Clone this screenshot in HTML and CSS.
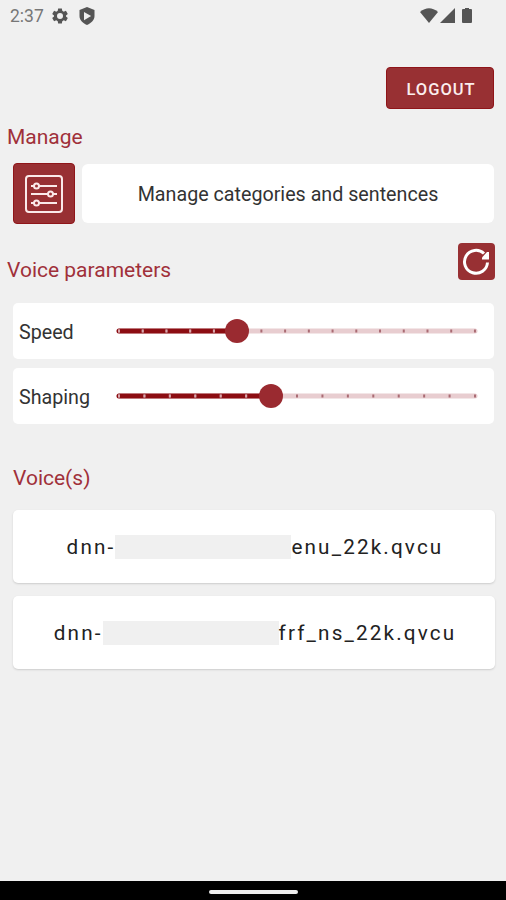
FILE: index.html
```
<!DOCTYPE html>
<html lang="en">
<head>
    <meta charset="UTF-8">
    <title>Voice settings</title>
    <link rel="stylesheet" href="styles.css">
</head>
<body>
    <header class="status-bar">
        <span class="clock">2:37</span>
        <svg class="gear" width="18" height="18" viewBox="0 0 24 24"><path fill-rule="evenodd" d="M9.500 2h5l.5 3 2 1.200 2.900-1.100 2.500 4.300-2.400 1.900v1.400l2.400 1.900-2.500 4.300-2.900-1.100-2 1.200-.5 3h-5L9 19l-2-1.200-2.900 1.100-2.500-4.300L4 12.700v-1.400L1.600 9.400l2.500-4.300L7 6.200 9 5zM12 8a4 4 0 1 0 0 8 4 4 0 0 0 0-8z"/></svg>
        <svg class="shield" width="18" height="18" viewBox="0 0 24 24"><path fill-rule="evenodd" d="M12 0l10 4v8c0 5-4 9.500-10 12-6-2.500-10-7-10-12V4zM8 6.500v11l9.500-5.500z"/></svg>
        <svg class="signals" width="54" height="16" viewBox="0 0 54 16">
            <path d="M0 4Q9-3.500 18 4L9 15z"/>
            <path d="M35 0v15H20z"/>
            <path d="M45 1V0h4v1h2q1 0 1 1v12q0 1-1 1h-8q-1 0-1-1V2q0-1 1-1z"/>
        </svg>
    </header>

    <main>
        <button class="logout">LOGOUT</button>

        <h2>Manage</h2>
        <div class="manage-row">
            <button class="icon-button">
                <svg width="40" height="40" viewBox="0 0 40 40" fill="none" stroke="#fbeaea" stroke-width="2">
                    <rect x="2" y="2" width="36" height="36" rx="3"/>
                    <path d="M7 12h3M15 12h18M7 20h17M29 20h4M7 29h3M15 29h18"/>
                    <circle cx="12.500" cy="12" r="2.500"/>
                    <circle cx="26.500" cy="20" r="2.500"/>
                    <circle cx="12.500" cy="29" r="2.500"/>
                </svg>
            </button>
            <button class="manage-button">Manage categories and sentences</button>
        </div>

        <div class="voice-head">
            <h2>Voice parameters</h2>
            <button class="refresh">
                <svg width="37" height="37" viewBox="0 0 37 37">
                    <path d="M29.500 19.500A11.500 11.500 0 1 1 26 10.500" fill="none" stroke="#fff" stroke-width="3"/>
                    <path d="M29 9h2v7.500h-7v-2z" fill="#fff"/>
                </svg>
            </button>
        </div>

        <div class="param">
            <label>Speed</label>
            <svg class="slider" width="364" height="26" viewBox="0 0 364 26">
                <path class="track" d="M4 13H360"/>
                <path class="filled" d="M4 13H122"/>
                <path class="ticks" d="M3 13H362" stroke-dasharray="2 21.730"/>
                <path class="ticks light" d="M3 13H122" stroke-dasharray="2 21.730"/>
                <circle cx="122" cy="13" r="12"/>
            </svg>
        </div>
        <div class="param">
            <label>Shaping</label>
            <svg class="slider" width="364" height="26" viewBox="0 0 364 26">
                <path class="track" d="M4 13H360"/>
                <path class="filled" d="M4 13H156"/>
                <path class="ticks" d="M3 13H362" stroke-dasharray="2 23.430"/>
                <path class="ticks light" d="M3 13H156" stroke-dasharray="2 23.430"/>
                <circle cx="156" cy="13" r="12"/>
            </svg>
        </div>

        <h2 class="voices-title">Voice(s)</h2>
        <button class="voice"><span>dnn-</span><i class="mask"></i><span>enu_22k.qvcu</span></button>
        <button class="voice"><span>dnn-</span><i class="mask"></i><span>frf_ns_22k.qvcu</span></button>
    </main>

    <footer class="nav-bar"><div class="handle"></div></footer>
</body>
</html>
```

FILE: styles.css
```
* { box-sizing: border-box; }
body { margin: 0; height: 900px; display: flex; flex-direction: column; background: #f0f0f0; color: #333; font-family: Roboto, sans-serif; overflow: hidden; }
button { border: 0; padding: 0; font-family: inherit; color: inherit; }
svg { display: block; }

/* Status bar */
.status-bar { height: 32px; padding: 0 32px 0 10px; display: flex; align-items: center; fill: #555; }
.clock { width: 41px; font-size: 17.5px; line-height: 32px; color: #777; }
.shield { margin-left: 9px; }
.signals { margin-left: auto; }

main { flex: 1; padding: 35px 12px 0; display: flex; flex-direction: column; }
h2 { margin: 0 0 0 -5px; font-size: 21px; font-weight: 400; line-height: 28px; color: #a0303a; }

.logout { align-self: flex-end; width: 108px; height: 42px; margin-bottom: 14px; padding: 3px 0 0 2px; border: 1px solid #8f1519; border-radius: 4px; background: #983033; color: #fbeeee; font-size: 16.5px; font-weight: 500; letter-spacing: 1px; }

/* Manage */
.manage-row { display: flex; gap: 7px; margin-top: 12px; }
.icon-button { width: 62px; height: 61px; margin-left: 1px; display: flex; align-items: center; justify-content: center; background: #983033; border: 1px solid #8f1519; border-radius: 4px; }
.manage-button { width: 412px; height: 59px; margin-top: 1px; padding-top: 2px; background: #fff; border-radius: 6px; font-size: 19.7px; }

/* Voice parameters */
.voice-head { display: flex; justify-content: space-between; align-items: flex-start; margin-top: 19px; }
.voice-head h2 { margin-top: 13px; }
.refresh { width: 37px; height: 37px; margin-right: -1px; background: #983033; border-radius: 4px; }
.param { width: 481px; height: 56px; margin: 0 0 9px 1px; padding-left: 6px; display: flex; align-items: center; background: #fff; border-radius: 5px; }
.voice-head + .param { margin-top: 19px; }
.param label { width: 96px; padding-top: 2px; font-size: 19.7px; }
.slider path { fill: none; stroke-width: 5; }
.slider .track { stroke: #e8cdd0; stroke-linecap: round; }
.slider .filled { stroke: #8c0d12; stroke-linecap: round; }
.slider .ticks { stroke: #a96b73; stroke-width: 3; }
.slider .light { stroke: #dba9ae; }
.slider circle { fill: #9a2a30; }

/* Voices */
.voices-title { margin: 31px 0 18px 1px; }
.voice { width: 482px; height: 73px; margin: 0 0 13px 1px; padding-left: 2px; display: flex; align-items: center; justify-content: center; background: #fff; border-radius: 5px; box-shadow: 0 1px 2px #ccc; color: #222; font-size: 20.7px; letter-spacing: 2.15px; }
.mask { width: 176px; height: 24px; background: #f0f0f0; }

/* Navigation bar */
.nav-bar { height: 19px; display: flex; justify-content: center; align-items: center; background: #000; }
.handle { width: 89px; height: 4px; margin-top: 2px; border-radius: 2px; background: #eee; }
```
